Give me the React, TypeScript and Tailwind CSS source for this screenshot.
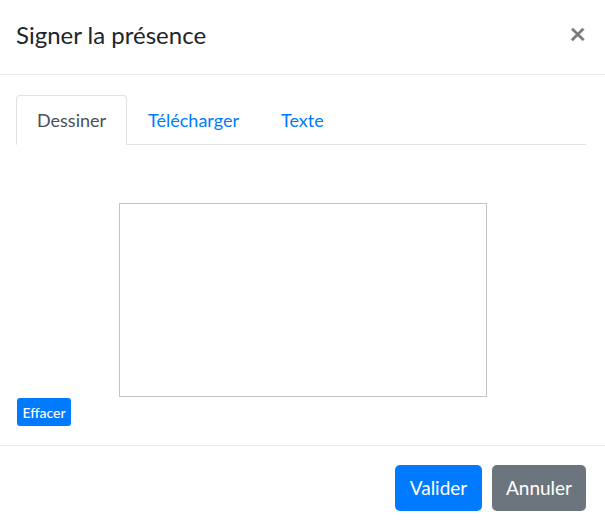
import React, { useState } from 'react';

type Tab = 'draw' | 'upload' | 'text';

const tabs: { id: Tab; label: string }[] = [
    { id: 'draw', label: 'Dessiner' },
    { id: 'upload', label: 'Télécharger' },
    { id: 'text', label: 'Texte' },
];

const App: React.FC = () => {
    const [tab, setTab] = useState<Tab>('draw');

    return (
        <div className="w-[605px] h-[530px] bg-white text-[#212529] flex flex-col" style={{ fontFamily: 'Lato, "Liberation Sans", sans-serif' }}>
            <div className="h-[75px] flex items-center justify-between pl-4 pr-[19px] border-b border-[#e9ecef]">
                <h5 className="text-[24px] leading-none pb-1">Signer la présence</h5>
                <button className="text-[29px] font-bold text-[#7a7a7a] leading-none pb-[10px]">×</button>
            </div>

            <div className="px-4 pt-5 flex flex-col">
                <div className="flex border-b border-[#dee2e6] mr-[3px]">
                    {tabs.map(t => (
                        <button
                            key={t.id}
                            onClick={() => setTab(t.id)}
                            className={`h-[50px] px-5 text-[18px] -mb-px rounded-t border ${tab === t.id ? 'border-[#dee2e6] border-b-white text-[#495057] bg-white' : 'border-transparent text-[#007bff]'}`}
                        >
                            {t.label}
                        </button>
                    ))}
                </div>

                <div className="flex justify-center mt-[58px]">
                    <div className="w-[368px] h-[194px] border border-[#c4c4c4]" />
                </div>

                <div className="mt-[1px] pl-px">
                    <button className="h-[28px] w-[54px] bg-[#007bff] text-white text-[14px] font-medium rounded-[3px]">Effacer</button>
                </div>
            </div>

            <div className="mt-[19px] border-t border-[#e9ecef] flex justify-end gap-[10px] px-[19px] pt-[19px]">
                <button className="h-[46px] w-[87px] bg-[#007bff] text-white text-[19px] rounded-[5px]">Valider</button>
                <button className="h-[46px] w-[94px] bg-[#6c757d] text-white text-[19px] rounded-[5px]">Annuler</button>
            </div>
        </div>
    );
};

export default App;
